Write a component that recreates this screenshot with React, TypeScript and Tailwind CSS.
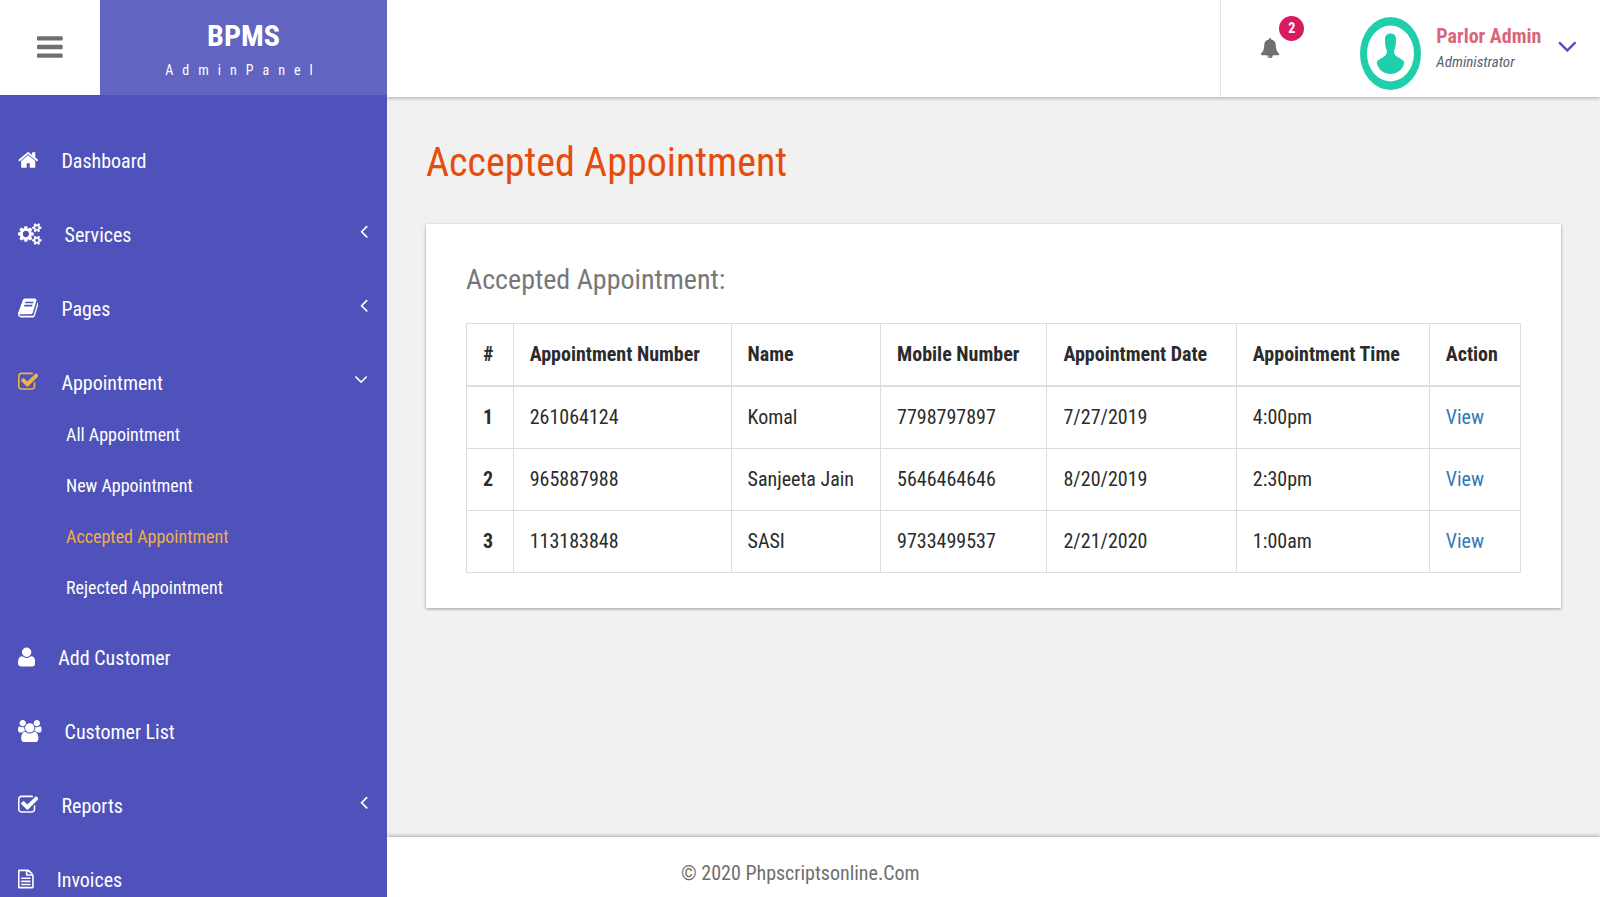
import React, { useState } from 'react'

interface IconProps {
  name: string
  className?: string
}

interface SubItem {
  id: number
  name: string
}

interface MenuItem {
  id: number
  name: string
  icon: string
  children?: SubItem[]
}

interface AppointmentInterface {
  _id: number
  appointmentNumber: string
  name: string
  mobileNumber: string
  date: string
  time: string
}

// width is the advance of each glyph, height is always 1792
const iconList: Record<string, { width: number, path: string, flip?: boolean }> = {
  bars: {
    width: 1536,
    path: "M1536 1344v128q0 26-19 45t-45 19h-1408q-26 0-45-19t-19-45v-128q0-26 19-45t45-19h1408q26 0 45 19t19 45zm0-512v128q0 26-19 45t-45 19h-1408q-26 0-45-19t-19-45v-128q0-26 19-45t45-19h1408q26 0 45 19t19 45zm0-512v128q0 26-19 45t-45 19h-1408q-26 0-45-19t-19-45v-128q0-26 19-45t45-19h1408q26 0 45 19t19 45z",
  },
  home: {
    width: 1664,
    path: "M1408 992v480q0 26-19 45t-45 19h-384v-384h-256v384h-384q-26 0-45-19t-19-45v-480q0-1 .5-3t.5-3l575-474 575 474q1 2 1 6zm223-69l-62 74q-8 9-21 11h-3q-13 0-21-7l-692-577-692 577q-12 8-24 7-13-2-21-11l-62-74q-8-10-7-23.5t11-21.5l719-599q32-26 76-26t76 26l244 204v-195q0-14 9-23t23-9h192q14 0 23 9t9 23v408l219 182q10 8 11 21.5t-7 23.5z",
  },
  cogs: {
    width: 1920,
    path: "M896 896q0-106-75-181t-181-75-181 75-75 181 75 181 181 75 181-75 75-181zm768 512q0-52-38-90t-90-38-90 38-38 90q0 53 37.5 90.5t90.5 37.5 90.5-37.5 37.5-90.5zm0-1024q0-52-38-90t-90-38-90 38-38 90q0 53 37.5 90.5t90.5 37.5 90.5-37.5 37.5-90.5zm-384 421v185q0 10-7 19.5t-16 10.5l-155 24q-11 35-32 76 34 48 90 115 7 11 7 20 0 12-7 19-23 30-82.5 89.5t-78.5 59.5q-11 0-21-7l-115-90q-37 19-77 31-11 108-23 155-7 24-30 24h-186q-11 0-20-7.5t-10-17.5l-23-153q-34-10-75-31l-118 89q-7 7-20 7-11 0-21-8-144-133-144-160 0-9 7-19 10-14 41-53t47-61q-23-44-35-82l-152-24q-10-1-17-9.5t-7-19.5v-185q0-10 7-19.5t16-10.5l155-24q11-35 32-76-34-48-90-115-7-11-7-20 0-12 7-20 22-30 82-89t79-59q11 0 21 7l115 90q34-18 77-32 11-108 23-154 7-24 30-24h186q11 0 20 7.5t10 17.5l23 153q34 10 75 31l118-89q8-7 20-7 11 0 21 8 144 133 144 160 0 8-7 19-12 16-42 54t-45 60q23 48 34 82l152 23q10 2 17 10.5t7 19.5zm640 533v140q0 16-149 31-12 27-30 52 51 113 51 138 0 4-4 7-122 71-124 71-8 0-46-47t-52-68q-20 2-30 2t-30-2q-14 21-52 68t-46 47q-2 0-124-71-4-3-4-7 0-25 51-138-18-25-30-52-149-15-149-31v-140q0-16 149-31 13-29 30-52-51-113-51-138 0-4 4-7 4-2 35-20t59-34 30-16q8 0 46 46.5t52 67.5q20-2 30-2t30 2q51-71 92-112l6-2q4 0 124 70 4 3 4 7 0 25-51 138 17 23 30 52 149 15 149 31zm0-1024v140q0 16-149 31-12 27-30 52 51 113 51 138 0 4-4 7-122 71-124 71-8 0-46-47t-52-68q-20 2-30 2t-30-2q-14 21-52 68t-46 47q-2 0-124-71-4-3-4-7 0-25 51-138-18-25-30-52-149-15-149-31v-140q0-16 149-31 13-29 30-52-51-113-51-138 0-4 4-7 4-2 35-20t59-34 30-16q8 0 46 46.5t52 67.5q20-2 30-2t30 2q51-71 92-112l6-2q4 0 124 70 4 3 4 7 0 25-51 138 17 23 30 52 149 15 149 31z",
  },
  book: {
    width: 1664,
    path: "M1639 478q40 57 18 129l-275 906q-19 64-76.5 107.5t-122.5 43.5h-923q-77 0-148.5-53.5t-99.5-131.5q-24-67-2-127 0-4 3-27t4-37q1-8-3-21.5t-3-19.5q2-11 8-21t16.5-23.5 16.5-23.5q23-38 45-91.5t30-91.5q3-10 .5-30t-.5-28q3-11 17-28t17-23q21-36 42-92t25-90q1-9-2.5-32t.5-28q4-13 22-30.5t22-22.5q19-26 42.5-84.5t27.5-96.5q1-8-3-25.5t-2-26.5q2-8 9-18t18-23 17-21q8-12 16.5-30.5t15-35 16-36 19.5-32 26.5-23.5 36-11.5 47.5 5.5l-1 3q38-9 51-9h761q74 0 114 56t18 130l-274 906q-36 119-71.5 153.5t-128.5 34.5h-869q-27 0-38 15-11 16-1 43 24 70 144 70h923q29 0 56-15.5t35-41.5l300-987q7-22 5-57 38 15 59 43zm-1064 2q-4 13 2 22.5t20 9.5h608q13 0 25.5-9.5t16.5-22.5l21-64q4-13-2-22.5t-20-9.5h-608q-13 0-25.5 9.5t-16.5 22.5zm-83 256q-4 13 2 22.5t20 9.5h608q13 0 25.5-9.5t16.5-22.5l21-64q4-13-2-22.5t-20-9.5h-608q-13 0-25.5 9.5t-16.5 22.5z",
  },
  check: {
    width: 1664,
    path: "M1408 930v318q0 119-84.5 203.5t-203.5 84.5h-832q-119 0-203.5-84.5t-84.5-203.5v-832q0-119 84.5-203.5t203.5-84.5h832q63 0 117 25 15 7 18 23 3 17-9 29l-49 49q-10 10-23 10-3 0-9-2-23-6-45-6h-832q-66 0-113 47t-47 113v832q0 66 47 113t113 47h832q66 0 113-47t47-113v-254q0-13 9-22l64-64q10-10 23-10 6 0 12 3 20 8 20 29zm231-489l-814 814q-24 24-57 24t-57-24l-430-430q-24-24-24-57t24-57l110-110q24-24 57-24t57 24l263 263 647-647q24-24 57-24t57 24l110 110q24 24 24 57t-24 57z",
  },
  user: {
    width: 1408,
    flip: true,
    path: "M1408 131q0-120-73-189.5t-194-69.5h-874q-121 0-194 69.5t-73 189.5q0 53 3.5 103.5t14 109t26.5 108.5t43 97.5t62 81t85.5 53.5t111.5 20q9 0 42-21.5t74.5-48t108-48t133.5-21.5t133.5 21.5t108 48t74.5 48t42 21.5q61 0 111.5-20t85.5-53.5t62-81t43-97.5t26.5-108.5t14-109t3.5-103.5zM1088 1024q0-159-112.5-271.5t-271.5-112.5t-271.5 112.5t-112.5 271.5t112.5 271.5t271.5 112.5t271.5-112.5t112.5-271.5z",
  },
  users: {
    width: 1920,
    path: "M593 896q-162 5-265 128h-134q-82 0-138-40.5t-56-118.5q0-353 124-353 6 0 43.5 21t97.5 42.5 119 21.5q67 0 133-23-5 37-5 66 0 139 81 256zm1071 637q0 120-73 189.5t-194 69.5h-874q-121 0-194-69.5t-73-189.5q0-53 3.5-103.5t14-109 26.5-108.5 43-97.5 62-81 85.5-53.5 111.5-20q10 0 43 21.5t73 48 107 48 135 21.5 135-21.5 107-48 73-48 43-21.5q61 0 111.5 20t85.5 53.5 62 81 43 97.5 26.5 108.5 14 109 3.5 103.5zm-1024-1277q0 106-75 181t-181 75-181-75-75-181 75-181 181-75 181 75 75 181zm704 384q0 159-112.5 271.5t-271.5 112.5-271.5-112.5-112.5-271.5 112.5-271.5 271.5-112.5 271.5 112.5 112.5 271.5zm576 225q0 78-56 118.5t-138 40.5h-134q-103-123-265-128 81-117 81-256 0-29-5-66 66 23 133 23 59 0 119-21.5t97.5-42.5 43.5-21q124 0 124 353zm-128-609q0 106-75 181t-181 75-181-75-75-181 75-181 181-75 181 75 75 181z",
  },
  file: {
    width: 1280,
    flip: true,
    path: "M128 0h1024v896h-416q-40 0-68 28t-28 68v288h-512v-1280zM768 1024h360q-10 17-22 29l-297 185q-12 12-41 22v-236zM1280 992v-1024q0-40-28-68t-68-28h-1088q-40 0-68 28t-28 68v1344q0 40 28 68t68 28h704q40 0 88-20t76-48l220-220q28-28 28-128zM288 640h704q32 0 32 32v64q0 32-32 32h-704q-32 0-32-32v-64q0-32 32-32zM288 384h704q32 0 32 32v64q0 32-32 32h-704q-32 0-32-32v-64q0-32 32-32zM288 128h704q32 0 32 32v64q0 32-32 32h-704q-32 0-32-32v-64q0-32 32-32z",
  },
  bell: {
    width: 1792,
    path: "M912 1696q0-16-16-16-59 0-101.5-42.5t-42.5-101.5q0-16-16-16t-16 16q0 73 51.5 124.5t124.5 51.5q16 0 16-16zm816-288q0 52-38 90t-90 38h-448q0 106-75 181t-181 75-181-75-75-181h-448q-52 0-90-38t-38-90q50-42 91-88t85-119.5 74.5-158.5 50-206 19.5-260q0-152 117-282.5t307-158.5q-8-19-8-39 0-40 28-68t68-28 68 28 28 68q0 20-8 39 190 28 307 158.5t117 282.5q0 139 19.5 260t50 206 74.5 158.5 85 119.5 91 88z",
  },
  angleLeft: {
    width: 640,
    path: "M627 544q0 13-10 23l-393 393 393 393q10 10 10 23t-10 23l-50 50q-10 10-23 10t-23-10l-466-466q-10-10-10-23t10-23l466-466q10-10 23-10t23 10l50 50q10 10 10 23z",
  },
  angleDown: {
    width: 1152,
    path: "M1075 736q0 13-10 23l-466 466q-10 10-23 10t-23-10l-466-466q-10-10-10-23t10-23l50-50q10-10 23-10t23 10l393 393 393-393q10-10 23-10t23 10l50 50q10 10 10 23z",
  },
}

const menuList: MenuItem[] = [
  { id: 1, name: "Dashboard", icon: "home" },
  { id: 2, name: "Services", icon: "cogs", children: [] },
  { id: 3, name: "Pages", icon: "book", children: [] },
  {
    id: 4,
    name: "Appointment",
    icon: "check",
    children: [
      { id: 1, name: "All Appointment" },
      { id: 2, name: "New Appointment" },
      { id: 3, name: "Accepted Appointment" },
      { id: 4, name: "Rejected Appointment" },
    ],
  },
  { id: 5, name: "Add Customer", icon: "user" },
  { id: 6, name: "Customer List", icon: "users" },
  { id: 7, name: "Reports", icon: "check", children: [] },
  { id: 8, name: "Invoices", icon: "file" },
]

const columnList = ["#", "Appointment Number", "Name", "Mobile Number", "Appointment Date", "Appointment Time", "Action"]

const appointmentList: AppointmentInterface[] = [
  { _id: 1, appointmentNumber: "261064124", name: "Komal", mobileNumber: "7798797897", date: "7/27/2019", time: "4:00pm" },
  { _id: 2, appointmentNumber: "965887988", name: "Sanjeeta Jain", mobileNumber: "5646464646", date: "8/20/2019", time: "2:30pm" },
  { _id: 3, appointmentNumber: "113183848", name: "SASI", mobileNumber: "9733499537", date: "2/21/2020", time: "1:00am" },
]

function Icon({ name, className }: IconProps) {
  const icon = iconList[name]
  return (
    <svg viewBox={`0 0 ${icon.width} 1792`} className={className} fill="currentColor" fillRule={name == "file" ? "evenodd" : "nonzero"} aria-hidden="true">
      <path d={icon.path} transform={icon.flip ? "matrix(1 0 0 -1 0 1536)" : undefined} />
    </svg>
  )
}

function Avatar() {
  return (
    <svg viewBox="0 0 61 73" className="h-[73px] w-[61px] shrink-0" aria-hidden="true">
      <ellipse cx="30.500" cy="36.500" rx="30.500" ry="36.500" fill="#1fceab" />
      <ellipse cx="30.500" cy="36.500" rx="23.500" ry="28" fill="#fff" />
      <path fill="#1fceab" d="M30.500 16.500c3.500 0 5.500 2 5.500 6 0 5-.5 8.500-2 11.500 0 3 1 4.500 4 6.300 3 1.700 5.800 3 6.300 5.400-1.500 7-7.300 11.300-13.800 11.300s-12.300-4.300-13.800-11.300c.5-2.400 3.300-3.700 6.300-5.400 3-1.800 4-3.300 4-6.300-1.500-3-2-6.500-2-11.500 0-4 2-6 5.500-6z" />
    </svg>
  )
}

function Sidebar() {
  const [openMenu, setOpenMenu] = useState(4)
  const [currentSub, setCurrentSub] = useState(3)

  return (
    <nav className="min-h-0 flex-1 overflow-y-auto bg-[#4f52ba] pt-[29px] text-white [scrollbar-width:none]">
      <ul>
        {menuList.map((ele) => {
          const isOpen = openMenu == ele.id
          return (
            <li key={ele.id}>
              <a href="#" onClick={() => setOpenMenu(isOpen ? 0 : ele.id)} className="flex h-[74px] items-center pr-[19px] pl-[18px] text-xl">
                <Icon name={ele.icon} className={isOpen ? "mb-0.5 h-[22px] w-auto text-[#f2b33f]" : "mb-0.5 h-[22px] w-auto"} />
                <span className="ml-[23px] flex-1">{ele.name}</span>
                {ele.children ? <Icon name={isOpen ? "angleDown" : "angleLeft"} className="mb-2 h-[22px] w-auto" /> : ""}
              </a>
              {isOpen && ele.children ? <ul className="-mt-[11px] pb-2">
                {ele.children.map((sub) => (
                  <li key={sub.id}>
                    <a href="#" onClick={() => setCurrentSub(sub.id)} className={currentSub == sub.id ? "flex h-[51px] items-center pl-[66px] text-lg text-[#f0ad4e]" : "flex h-[51px] items-center pl-[66px] text-lg"}>{sub.name}</a>
                  </li>
                ))}
              </ul> : ""}
            </li>
          )
        })}
      </ul>
    </nav>
  )
}

function Header() {
  return (
    <header className="z-10 flex h-[97px] shrink-0 justify-end bg-white shadow-[0_1px_4px_rgba(0,0,0,0.3)]">
      <div className="flex items-center border-l border-[#e6e6e6] pl-[39px]">
        <button type="button" aria-label="Notifications" className="relative mb-0.5 text-[#6f6f6f]">
          <Icon name="bell" className="h-5 w-5" />
          <span className="absolute -top-[22px] left-[19px] flex h-[25px] w-[25px] items-center justify-center rounded-full bg-[#d81b60] text-sm font-bold text-white">2</span>
        </button>
        <button type="button" className="ml-20 flex items-center pt-2.5 pr-[22px] text-left">
          <Avatar />
          <span className="mb-3 ml-[15px] block">
            <span className="block text-xl leading-7 font-bold text-[#d9667b]">Parlor Admin</span>
            <span className="block text-[15px] leading-6 text-[#555f6e] italic">Administrator</span>
          </span>
          <Icon name="angleDown" className="mb-4 ml-4 h-8 w-auto text-[#4f52ba]" />
        </button>
      </div>
    </header>
  )
}

function App() {
  return (
    <div className="flex h-screen overflow-hidden bg-[#f1f1f1] font-['Roboto_Condensed',Roboto,sans-serif]">
      <aside className="relative z-20 flex w-[387px] shrink-0 flex-col">
        <div className="flex h-[95px] shrink-0 bg-white">
          <button type="button" aria-label="Toggle menu" className="flex w-[100px] items-center justify-center pb-0.5 text-[#6f6f6f]">
            <Icon name="bars" className="h-[30px] w-auto" />
          </button>
          <a href="#" className="flex flex-1 flex-col items-center justify-center bg-[#6164c1] pt-2 text-white">
            <span className="text-3xl leading-9 font-bold">BPMS</span>
            <span className="text-sm leading-8 tracking-[9px]">AdminPanel</span>
          </a>
        </div>
        <Sidebar />
      </aside>

      <div className="flex min-w-0 flex-1 flex-col">
        <Header />
        <main className="min-h-0 flex-1 overflow-y-auto px-[39px] pt-[41px]">
          <h1 className="text-[40px] leading-[50px] text-[#e64d0a]">Accepted Appointment</h1>
          <section className="mt-9 bg-white px-10 pt-9 pb-[35px] shadow-[0_1px_3px_rgba(0,0,0,0.35)]">
            <h2 className="mb-[23px] text-[28px] leading-10 text-[#777]">Accepted Appointment:</h2>
            <table className="w-full border-collapse border border-[#ddd] text-left text-xl leading-[29px] text-[#2b2b2b]">
              <thead>
                <tr className="border-b-2 border-[#ddd]">
                  {columnList.map((column) => (
                    <th key={column} scope="col" className="border-x border-[#ddd] px-4 py-4 font-bold">{column}</th>
                  ))}
                </tr>
              </thead>
              <tbody>
                {appointmentList.map((appointment) => (
                  <tr key={appointment._id}>
                    <th scope="row" className="border border-[#ddd] px-4 py-4 font-bold">{appointment._id}</th>
                    <td className="border border-[#ddd] px-4 py-4">{appointment.appointmentNumber}</td>
                    <td className="border border-[#ddd] px-4 py-4">{appointment.name}</td>
                    <td className="border border-[#ddd] px-4 py-4">{appointment.mobileNumber}</td>
                    <td className="border border-[#ddd] px-4 py-4">{appointment.date}</td>
                    <td className="border border-[#ddd] px-4 py-4">{appointment.time}</td>
                    <td className="border border-[#ddd] px-4 py-4"><a href="#" className="text-[#337ab7]">View</a></td>
                  </tr>
                ))}
              </tbody>
            </table>
          </section>
        </main>
        <footer className="flex h-[60px] shrink-0 items-center bg-white pt-3 pl-[294px] shadow-[0_-1px_4px_rgba(0,0,0,0.3)]">
          <p className="text-xl text-[#6f6f6f]">© 2020 Phpscriptsonline.Com</p>
        </footer>
      </div>
    </div>
  )
}

export default App
